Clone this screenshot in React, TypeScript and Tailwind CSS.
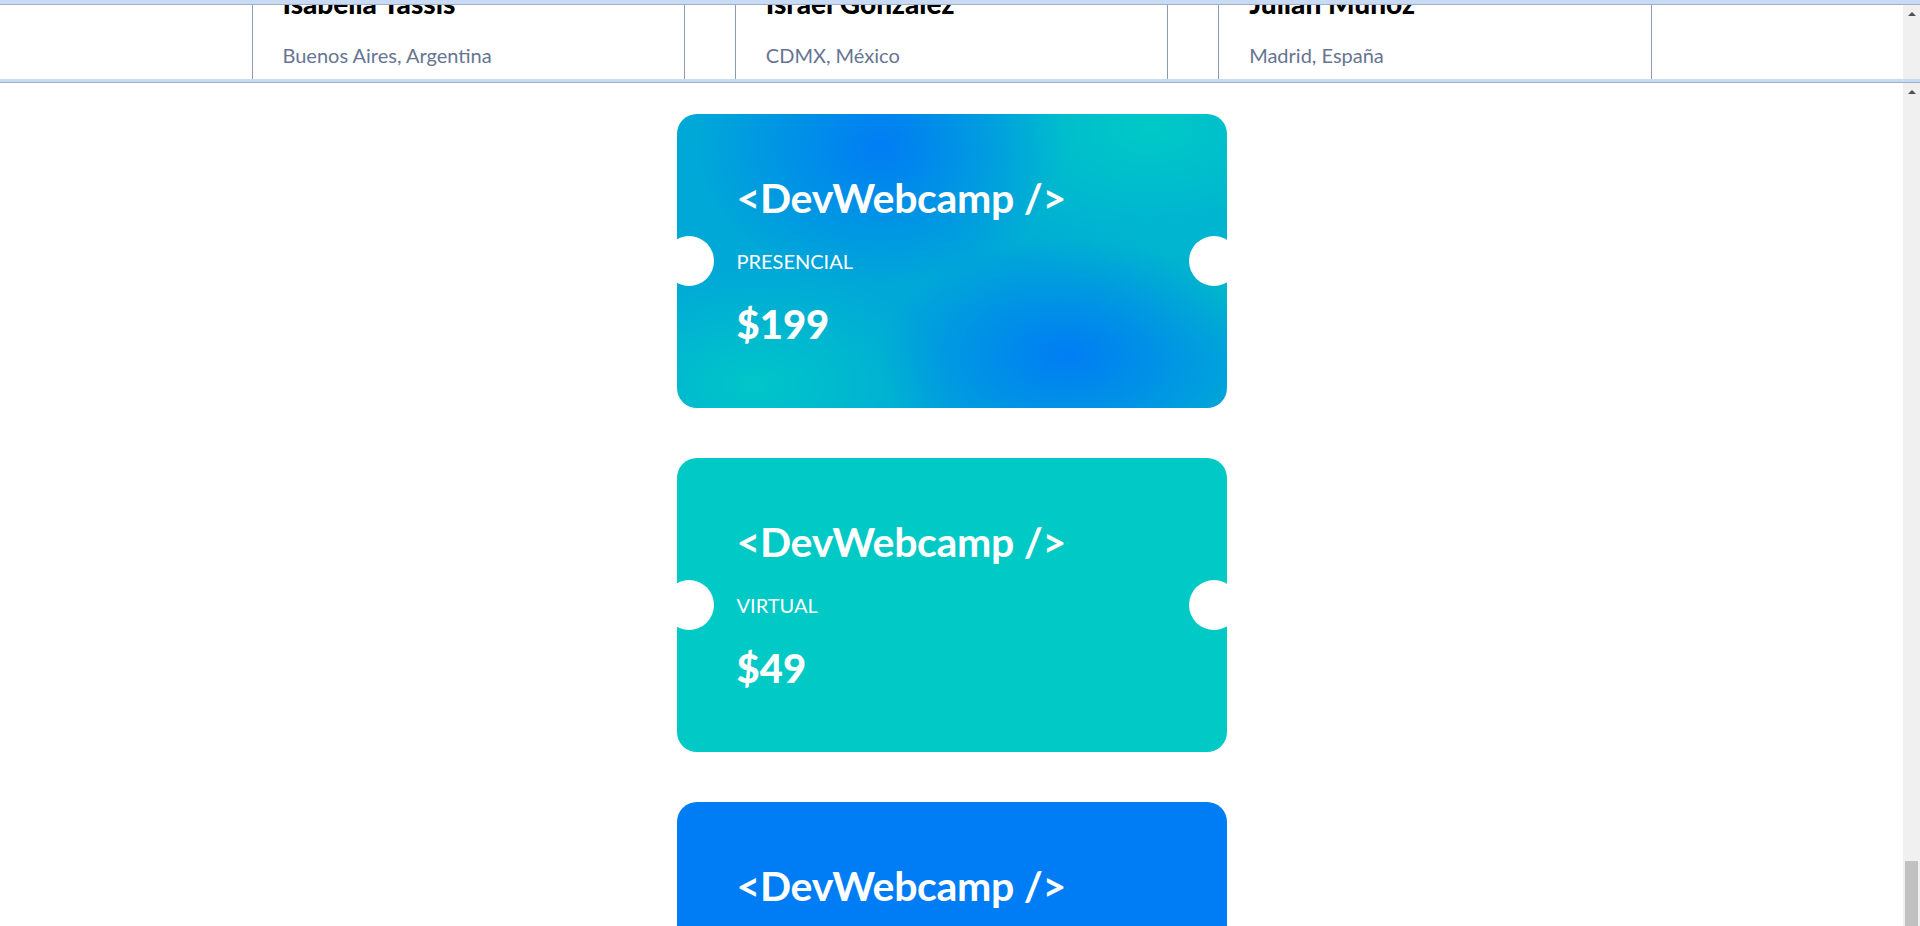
import React from "react";

type Speaker = { name: string; place: string };

const speakers: Speaker[] = [
  { name: "Isabella Tassis", place: "Buenos Aires, Argentina" },
  { name: "Israel González", place: "CDMX, México" },
  { name: "Julián Muñoz", place: "Madrid, España" },
];

function UpArrow() {
  return (
    <svg width="8" height="4" viewBox="0 0 8 4" className="block">
      <polygon points="4,0 8,4 0,4" fill="#505050" />
    </svg>
  );
}

function Ticket({
  plan,
  price,
  bg,
  tall,
}: {
  plan: string;
  price: string;
  bg: string;
  tall?: boolean;
}) {
  return (
    <div
      className={`relative w-[550px] shrink-0 rounded-[20px] px-[60px] py-[60px] text-white ${tall ? "h-[340px]" : "h-[294px]"} ${bg}`}
    >
      <p className="text-[41px] leading-[48px] font-bold tracking-[-0.3px]">&lt;DevWebcamp /&gt;</p>
      <p className="mt-[28px] text-[20px] leading-[22px] uppercase">{plan}</p>
      <p className="mt-[29px] text-[40px] leading-[46px] font-black">{price}</p>
      <div className="absolute left-[-12.5px] top-1/2 -translate-y-1/2 w-[50px] h-[50px] rounded-full bg-white" />
      <div className="absolute right-[-12.5px] top-1/2 -translate-y-1/2 w-[50px] h-[50px] rounded-full bg-white" />
    </div>
  );
}

export default function App() {
  return (
    <div className="h-[926px] w-full overflow-hidden flex flex-col bg-white font-['Lato','Noto_Sans',sans-serif]">
      <div className="h-[4px] bg-[#c9daf4] shrink-0" />
      <div className="h-px bg-[#9fb0ca] shrink-0" />
      {/* top frame */}
      <div className="h-[74px] shrink-0 flex">
        <div className="flex-1 overflow-hidden">
          <div className="w-[1400px] mx-auto grid grid-cols-3 gap-x-[50px] h-[74px]">
            {speakers.map((s) => (
              <div key={s.name} className="border-x border-[#8b9bb4] px-[30px] h-full">
                <p className="mt-[-16px] text-[28px] leading-[28px] font-black text-black whitespace-nowrap">{s.name}</p>
                <p className="mt-[28px] text-[20px] leading-[20px] text-[#667592] whitespace-nowrap">{s.place}</p>
              </div>
            ))}
          </div>
        </div>
        <div className="w-[17px] bg-[#f0f0f0] flex justify-center pt-[7px]">
          <UpArrow />
        </div>
      </div>
      <div className="h-[3px] bg-[#c9daf4] shrink-0" />
      <div className="h-px bg-[#9fb0ca] shrink-0" />
      {/* main frame */}
      <div className="flex-1 flex min-h-0">
        <div className="flex-1 overflow-hidden">
          <div className="pt-[31px] flex flex-col items-center gap-[50px]">
            <Ticket
              plan="Presencial"
              price="$199"
              bg="bg-[#00a8d7] bg-[image:radial-gradient(at_37%_11%,#007df4_0,transparent_38%),radial-gradient(at_71%_82%,#007df4_0,transparent_34%),radial-gradient(at_86%_5%,#00c9c6_0,transparent_40%),radial-gradient(at_14%_92%,#00c6c8_0,transparent_30%),radial-gradient(at_100%_60%,#00b6cc_0,transparent_30%)]"
            />
            <Ticket plan="Virtual" price="$49" bg="bg-[#00c9c6]" />
            <Ticket plan="Gratis" price="$0" bg="bg-[#007df4]" tall />
          </div>
        </div>
        <div className="w-[17px] bg-[#f0f0f0] flex flex-col items-center justify-between pt-[7px]">
          <UpArrow />
          <div className="w-[13px] h-[65px] bg-[#c1c1c1]" />
        </div>
      </div>
    </div>
  );
}
